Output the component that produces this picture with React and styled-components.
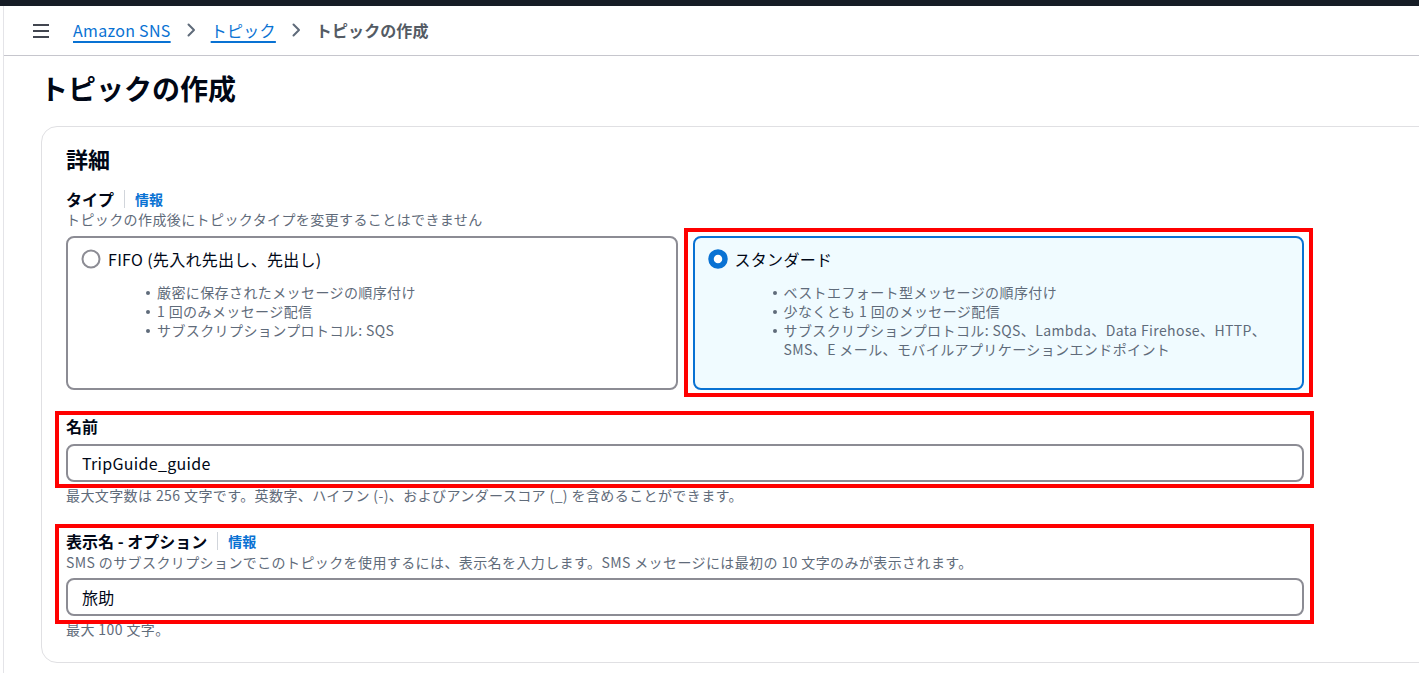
import React from "react";
import styled, { createGlobalStyle } from "styled-components";

const GlobalStyle = createGlobalStyle`
  html, body {
    margin: 0;
    padding: 0;
    background: #ffffff;
    overflow: hidden;
  }
  body {
    font-family: "Noto Sans CJK JP", "Noto Sans", sans-serif;
    color: #000716;
  }
`;

const TopBar = styled.div`
  height: 6px;
  background: #161d26;
`;

const Page = styled.div`
  margin-left: 3px;
  border-left: 1px solid #e4e4e8;
  min-height: 667px;
`;

const Header = styled.header`
  height: 49px;
  display: flex;
  align-items: center;
  padding-left: 29px;
  border-bottom: 1px solid #c6c6cd;
`;

const Burger = styled.button`
  width: 16px;
  height: 16px;
  padding: 0;
  border: 0;
  background: none;
  margin-right: 24px;
  display: flex;
  align-items: center;
`;

const Crumbs = styled.nav`
  display: flex;
  align-items: center;
  gap: 12px;
  font-size: 16px;
  line-height: 22px;
  letter-spacing: 0.3px;
  margin-top: -1px;
`;

const CrumbLink = styled.a`
  color: #0972d3;
  text-decoration: underline;
  text-decoration-thickness: 1.5px;
  text-underline-offset: 4px;
`;

const CrumbCurrent = styled.span`
  color: #545b64;
  font-weight: 700;
  letter-spacing: 0.1px;
`;

const Main = styled.main`
  padding: 14px 0 0 37px;
`;

const Title = styled.h1`
  margin: 0 0 20px -1px;
  font-size: 28px;
  line-height: 36px;
  font-weight: 700;
  color: #000716;
`;

const Card = styled.section`
  box-sizing: border-box;
  width: 1440px;
  border: 1px solid #e0e0e3;
  border-radius: 16px;
  padding: 17px 0 23px 24px;
`;

const Content = styled.div`
  width: 1238px;
  display: flex;
  flex-direction: column;
`;

const CardTitle = styled.h2`
  margin: 0 0 17px;
  font-size: 22px;
  line-height: 28px;
  font-weight: 700;
`;

const LabelRow = styled.div`
  display: flex;
  align-items: center;
  font-size: 16px;
  line-height: 20px;
  font-weight: 700;
`;

const InfoLink = styled.a`
  color: #0972d3;
  font-size: 14px;
  font-weight: 700;
  margin-left: 10px;
  padding-left: 10px;
  border-left: 1px solid #d1d5db;
  line-height: 18px;
`;

const Description = styled.div`
  font-size: 14px;
  line-height: 20px;
  letter-spacing: 0.4px;
  color: #5f6b7a;
  margin-top: ${(p) => p.$top || 0}px;
`;

const Tiles = styled.div`
  display: grid;
  grid-template-columns: 1fr 1fr;
  gap: 15px;
  margin-top: 7px;
`;

const Tile = styled.div`
  position: relative;
  border: 2px solid ${(p) => (p.$selected ? "#0972d3" : "#8c8c94")};
  background: ${(p) => (p.$selected ? "#f0fbff" : "#ffffff")};
  border-radius: 8px;
  padding: 10px 14px 29px 13px;
`;

const TileHead = styled.div`
  display: flex;
  align-items: center;
  gap: 7px;
  font-size: 16px;
  line-height: 22px;
  letter-spacing: 0.3px;
  color: #000716;
`;

const Bullets = styled.ul`
  margin: 13px 0 0;
  padding-left: 76px;
  font-size: 14px;
  line-height: 19px;
  letter-spacing: 0.4px;
  color: #5f6b7a;
  list-style: none;

  li {
    position: relative;
  }
  li::before {
    content: "";
    position: absolute;
    left: -11px;
    top: 8px;
    width: 4px;
    height: 4px;
    border-radius: 50%;
    background: #5f6b7a;
  }
`;

const Field = styled.div`
  position: relative;
  margin-top: ${(p) => p.$top}px;
  display: flex;
  flex-direction: column;
`;

const Highlight = styled.div`
  position: relative;

  &::after {
    content: "";
    position: absolute;
    inset: ${(p) => p.$inset};
    border: 4px solid #ff0000;
    pointer-events: none;
  }
`;

const Input = styled.input`
  box-sizing: border-box;
  width: 100%;
  height: 38px;
  margin-top: ${(p) => p.$top}px;
  border: 2px solid #8c8c94;
  border-radius: 8px;
  padding: 0 14px;
  font-family: "Noto Sans CJK JP", "Noto Sans", sans-serif;
  font-size: 16px;
  letter-spacing: 0.3px;
  color: #000716;
  background: #ffffff;
  outline: none;
`;

const Hint = styled.div`
  font-size: 14px;
  line-height: 20px;
  letter-spacing: 0.4px;
  color: #5f6b7a;
  margin-top: ${(p) => p.$top}px;
`;

function Chevron() {
  return (
    <svg width="16" height="16" viewBox="0 0 16 16" fill="none">
      <path d="M5.5 2.5L11 8l-5.5 5.5" stroke="#5f6b7a" strokeWidth="2" strokeLinecap="round" strokeLinejoin="round" />
    </svg>
  );
}

function Radio({ checked }) {
  return checked ? (
    <svg width="20" height="20" viewBox="0 0 20 20">
      <circle cx="10" cy="10" r="7" fill="#ffffff" stroke="#0972d3" strokeWidth="5.5" />
    </svg>
  ) : (
    <svg width="20" height="20" viewBox="0 0 20 20">
      <circle cx="10" cy="10" r="8.5" fill="#ffffff" stroke="#8c8c94" strokeWidth="2" />
    </svg>
  );
}

function TypeTile({ selected, title, items }) {
  return (
    <Tile $selected={selected}>
      <TileHead>
        <Radio checked={selected} />
        {title}
      </TileHead>
      <Bullets>
        {items.map((t) => (
          <li key={t}>{t}</li>
        ))}
      </Bullets>
    </Tile>
  );
}

export default function App() {
  return (
    <>
      <GlobalStyle />
      <TopBar />
      <Page>
        <Header>
          <Burger aria-label="menu">
            <svg width="16" height="16" viewBox="0 0 16 16">
              <path d="M0 2h16M0 8h16M0 14h16" stroke="#424650" strokeWidth="2" />
            </svg>
          </Burger>
          <Crumbs>
            <CrumbLink>Amazon SNS</CrumbLink>
            <Chevron />
            <CrumbLink>トピック</CrumbLink>
            <Chevron />
            <CrumbCurrent>トピックの作成</CrumbCurrent>
          </Crumbs>
        </Header>
        <Main>
          <Title>トピックの作成</Title>
          <Card>
            <Content>
              <CardTitle>詳細</CardTitle>
              <LabelRow>
                タイプ<InfoLink>情報</InfoLink>
              </LabelRow>
              <Description>トピックの作成後にトピックタイプを変更することはできません</Description>
              <Tiles>
                <TypeTile
                  title="FIFO (先入れ先出し、先出し)"
                  items={[
                    "厳密に保存されたメッセージの順序付け",
                    "1 回のみメッセージ配信",
                    "サブスクリプションプロトコル: SQS",
                  ]}
                />
                <Highlight $inset="-8px -9px -7px -9px">
                  <TypeTile
                    selected
                    title="スタンダード"
                    items={[
                      "ベストエフォート型メッセージの順序付け",
                      "少なくとも 1 回のメッセージ配信",
                      "サブスクリプションプロトコル: SQS、Lambda、Data Firehose、HTTP、SMS、E メール、モバイルアプリケーションエンドポイント",
                    ]}
                  />
                </Highlight>
              </Tiles>

              <Field $top={26}>
                <Highlight $inset="-5px -10px -6px -11px">
                  <LabelRow>名前</LabelRow>
                  <Input $top={8} defaultValue="TripGuide_guide" />
                </Highlight>
                <Hint $top={3}>
                  最大文字数は 256 文字です。英数字、ハイフン (-)、およびアンダースコア (_) を含めることができます。
                </Hint>
              </Field>

              <Field $top={26}>
                <Highlight $inset="-7px -10px -8px -11px">
                  <LabelRow>
                    表示名 - オプション<InfoLink>情報</InfoLink>
                  </LabelRow>
                  <Description $top={1}>
                    SMS のサブスクリプションでこのトピックを使用するには、表示名を入力します。SMS メッセージには最初の 10 文字のみが表示されます。
                  </Description>
                  <Input $top={6} defaultValue="旅助" />
                </Highlight>
                <Hint $top={3}>最大 100 文字。</Hint>
              </Field>
            </Content>
          </Card>
        </Main>
      </Page>
    </>
  );
}
